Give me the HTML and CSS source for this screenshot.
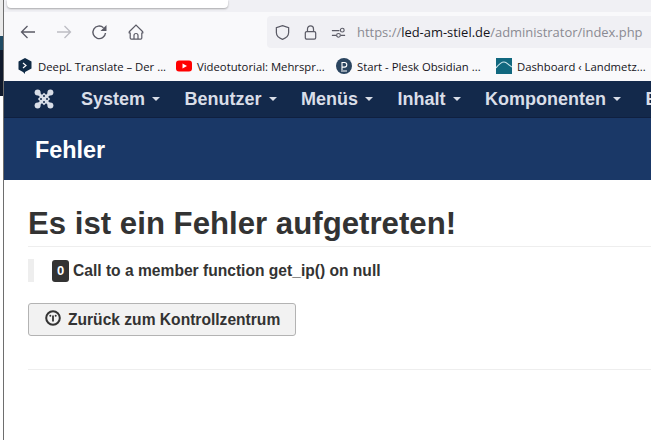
FILE: index.html
```html
<!DOCTYPE html>
<html lang="de">
<head>
<meta charset="utf-8">
<title>Fehler</title>
<link rel="stylesheet" href="styles.css">
</head>
<body>
<div class="shot">
  <div class="strip">
    <div class="strip-a"></div>
    <div class="strip-b"></div>
    <div class="strip-c"></div>
    <div class="strip-d"></div>
  </div>
  <div class="main">
    <div class="tabbar"><div class="tabcard"></div></div>
    <div class="toolbar">
      <div class="navicons">
        <svg class="ic" viewBox="0 0 18 18"><path d="M16 9H2.500M8.500 3l-6 6 6 6" fill="none" stroke="#5b5b66" stroke-width="1.300"/></svg>
        <svg class="ic" viewBox="0 0 18 18"><path d="M2 9h13.500M9.500 3l6 6-6 6" fill="none" stroke="#bdbdc3" stroke-width="1.300"/></svg>
        <svg class="ic" viewBox="0 0 18 18"><path d="M14.500 10a6.300 6.300 0 1 1-2-5.300" fill="none" stroke="#5b5b66" stroke-width="1.400"/><path d="M15.500 2v6h-6z" fill="#5b5b66"/></svg>
        <svg class="ic" viewBox="0 0 18 18"><path d="M2.500 8.500 9 2l6.500 6.500c.5.600.5 1 .3 1.500H14.800V15a1.200 1.200 0 0 1-1.200 1.200H4.400A1.200 1.200 0 0 1 3.200 15V10H2.200c-.2-.5-.2-.9.300-1.500zM7 16v-3.500a2 2 0 0 1 4 0V16" fill="none" stroke="#5b5b66" stroke-width="1.200"/></svg>
      </div>
      <div class="urlbar">
        <svg class="ic-s" viewBox="0 0 18 18"><path d="M9 1.800 15.500 4v5c0 3.500-3 6-6.500 7.300C5.500 15 2.500 12.500 2.500 9V4z" fill="none" stroke="#5b5b66" stroke-width="1.300"/></svg>
        <svg class="ic-s" viewBox="0 0 18 18"><rect x="3.500" y="8" width="11" height="8" rx="1.500" fill="none" stroke="#5b5b66" stroke-width="1.300"/><path d="M5.800 8V5.200a3.200 3.200 0 0 1 6.400 0V8" fill="none" stroke="#5b5b66" stroke-width="1.300"/></svg>
        <svg class="ic-s" viewBox="0 0 18 18"><path d="M2 7h8M2 12h4.500M11.500 12H16" fill="none" stroke="#5b5b66" stroke-width="1.200"/><circle cx="13" cy="6.500" r="2" fill="none" stroke="#5b5b66" stroke-width="1.200"/><circle cx="9" cy="12" r="2" fill="none" stroke="#5b5b66" stroke-width="1.200"/></svg>
        <span class="url"><span class="dim">https://</span>led-am-stiel.de<span class="dim">/administrator/index.php</span></span>
      </div>
    </div>
    <div class="bookmarks">
      <div class="bm bm1">
        <svg class="fav" viewBox="0 0 16 16"><path d="M8 0 14.500 3.500V10.500L8 14v2L6 14 1.500 11.500V3.500z" fill="#0f2b46"/><path d="M6 5l3 2.500L6 10" fill="none" stroke="#fff" stroke-width="1.200"/></svg>
        <span>DeepL Translate – Der ...</span>
      </div>
      <div class="bm bm2">
        <svg class="fav" viewBox="0 0 16 16"><rect y="2.500" width="16" height="11" rx="3" fill="#f00"/><path d="M6.500 5.500 11 8l-4.500 2.500z" fill="#fff"/></svg>
        <span>Videotutorial: Mehrspr...</span>
      </div>
      <div class="bm bm3">
        <svg class="fav" viewBox="0 0 16 16"><circle cx="8" cy="8" r="8" fill="#2b4560"/><path d="M6 12V4.500h2.500a2.300 2.300 0 0 1 0 4.600H6M5 13h6" fill="none" stroke="#fff" stroke-width="1.100"/></svg>
        <span>Start - Plesk Obsidian ...</span>
      </div>
      <div class="bm bm4">
        <svg class="fav" viewBox="0 0 16 16"><rect width="16" height="16" fill="#11687f"/><path d="M0 10C3 6 5 4 8 4s4 3 8 5" fill="none" stroke="#cfe8ee" stroke-width="1.100"/></svg>
        <span>Dashboard ‹ Landmetz...</span>
      </div>
    </div>
    <nav class="nav">
      <svg class="logo" viewBox="0 0 20 20">
        <path d="M3.500 3.500l13 13M16.500 3.500l-13 13" fill="none" stroke="#d9dee8" stroke-width="3"/>
        <path d="M10 3.800 16.200 10 10 16.200 3.800 10z" fill="#d9dee8"/>
        <g fill="#d9dee8"><circle cx="3.600" cy="3.600" r="3"/><circle cx="16.400" cy="3.600" r="3"/><circle cx="3.600" cy="16.400" r="3"/><circle cx="16.400" cy="16.400" r="3"/></g>
        <g fill="#13294b"><circle cx="10" cy="7" r="1"/><circle cx="10" cy="13" r="1"/><circle cx="7" cy="10" r="1"/><circle cx="13" cy="10" r="1"/></g>
      </svg>
      <span class="item">System<i class="caret"></i></span>
      <span class="item">Benutzer<i class="caret"></i></span>
      <span class="item">Menüs<i class="caret"></i></span>
      <span class="item">Inhalt<i class="caret"></i></span>
      <span class="item">Komponenten<i class="caret"></i></span>
      <span class="item">Erweiterungen</span>
    </nav>
    <header class="subhead"><h1>Fehler</h1></header>
    <main class="content">
      <h2>Es ist ein Fehler aufgetreten!</h2>
      <blockquote class="quote"><span class="badge">0</span> Call to a member function get_ip() on null</blockquote>
      <a class="btn">
        <svg class="btn-ic" viewBox="0 0 16 16"><circle cx="8" cy="8" r="6.800" fill="none" stroke="#333" stroke-width="2"/><path d="M8 5.500v6" fill="none" stroke="#333" stroke-width="1.800"/><circle cx="5.300" cy="5.800" r="1" fill="#333"/><circle cx="10.700" cy="5.800" r="1" fill="#333"/></svg>
        <span class="btn-label">Zurück zum Kontrollzentrum</span>
      </a>
      <hr class="rule">
    </main>
  </div>
</div>
</body>
</html>
```
FILE: styles.css
```css
* { box-sizing: border-box; }
html, body { margin: 0; padding: 0; background: #fff; }
body { width: 651px; height: 440px; overflow: hidden; font-family: "Liberation Sans", Arial, sans-serif; }
.shot { display: flex; width: 651px; height: 440px; overflow: hidden; }

.strip { flex: 0 0 4px; display: flex; flex-direction: column; border-right: 1px solid #6e6e6e; background: #fff; }
.strip-a { height: 36px; background: #eaeaea; }
.strip-b { height: 14px; background: #1f4a63; }
.strip-c { height: 46px; background: #101a2c; }
.strip-d { flex: 1; background: #fff; }

.main { flex: 1; min-width: 0; display: flex; flex-direction: column; }

.tabbar { height: 12px; background: #f0f0f4; padding-left: 3px; }
.tabcard { width: 221px; height: 8px; background: #fff; border-radius: 0 0 4px 4px; box-shadow: 0 1px 2px rgba(0,0,0,.3); }

.toolbar { height: 36px; background: #f9f9fb; display: flex; align-items: center; padding: 4px 0 0 15px; }
.navicons { display: flex; gap: 18px; width: 248px; }
.ic { width: 18px; height: 18px; display: block; }
.urlbar { flex: 1; height: 32px; background: #f0f0f4; border-radius: 4px 0 0 4px; display: flex; align-items: center; padding-left: 7px; gap: 11px; white-space: nowrap; overflow: hidden; }
.ic-s { width: 17px; height: 17px; flex: none; }
.url { font: 12.950px "Open Sans", sans-serif; color: #15141a; margin-left: -1px; }
.dim { color: #8a8a92; }

.bookmarks { height: 33px; background: #f9f9fb; display: flex; align-items: center; padding: 3px 0 0 13px; font: 11.300px "Open Sans", sans-serif; color: #15141a; white-space: nowrap; overflow: hidden; }
.bm { display: flex; align-items: center; gap: 5px; flex: none; }
.bm1 { width: 159px; }
.bm2 { width: 160px; }
.bm3 { width: 160px; }
.fav { width: 16px; height: 16px; flex: none; }

.nav { height: 37px; background: #13294b; display: flex; align-items: center; padding-left: 30px; color: #d9dee8; font-size: 18px; font-weight: 700; white-space: nowrap; overflow: hidden; border-bottom: 1px solid #0f2040; }
.logo { width: 20px; height: 20px; margin-right: 27px; flex: none; }
.item { display: inline-flex; align-items: center; margin-right: 24.500px; flex: none; }
.caret { width: 0; height: 0; margin-left: 7px; border-left: 4px solid transparent; border-right: 4px solid transparent; border-top: 4px solid #d9dee8; }

.subhead { height: 62px; background: #1a3867; padding: 2px 0 0 31px; display: flex; align-items: center; }
.subhead h1 { margin: 0; font-size: 23.400px; font-weight: 700; color: #fff; }

.content { flex: 1; padding: 24px 0 0 24px; color: #333; }
.content h2 { margin: 0; padding-bottom: 2px; font-size: 31.200px; line-height: 40px; font-weight: 700; color: #333; border-bottom: 1px solid #eee; }
.quote { margin: 12px 0 0; padding: 0 0 0 18px; height: 23px; border-left: 6px solid #eee; font-size: 15.600px; font-weight: 700; line-height: 23px; display: flex; align-items: center; gap: 4px; white-space: nowrap; }
.badge { display: inline-block; width: 17px; height: 22px; line-height: 22px; text-align: center; background: #333; color: #fff; border-radius: 3px; font-size: 13px; }
.btn { display: flex; align-items: center; gap: 7px; width: 268px; height: 33px; margin-top: 21px; padding-left: 16px; background: #f2f2f2; border: 1px solid #b3b3b3; border-radius: 3px; font-size: 15.600px; font-weight: 700; color: #333; white-space: nowrap; }
.btn-ic { width: 16px; height: 16px; flex: none; margin-top: -3px; }
.btn-label { padding-top: 1px; }
.rule { margin: 33px 0 0; border: 0; border-top: 1px solid #eee; }
```
